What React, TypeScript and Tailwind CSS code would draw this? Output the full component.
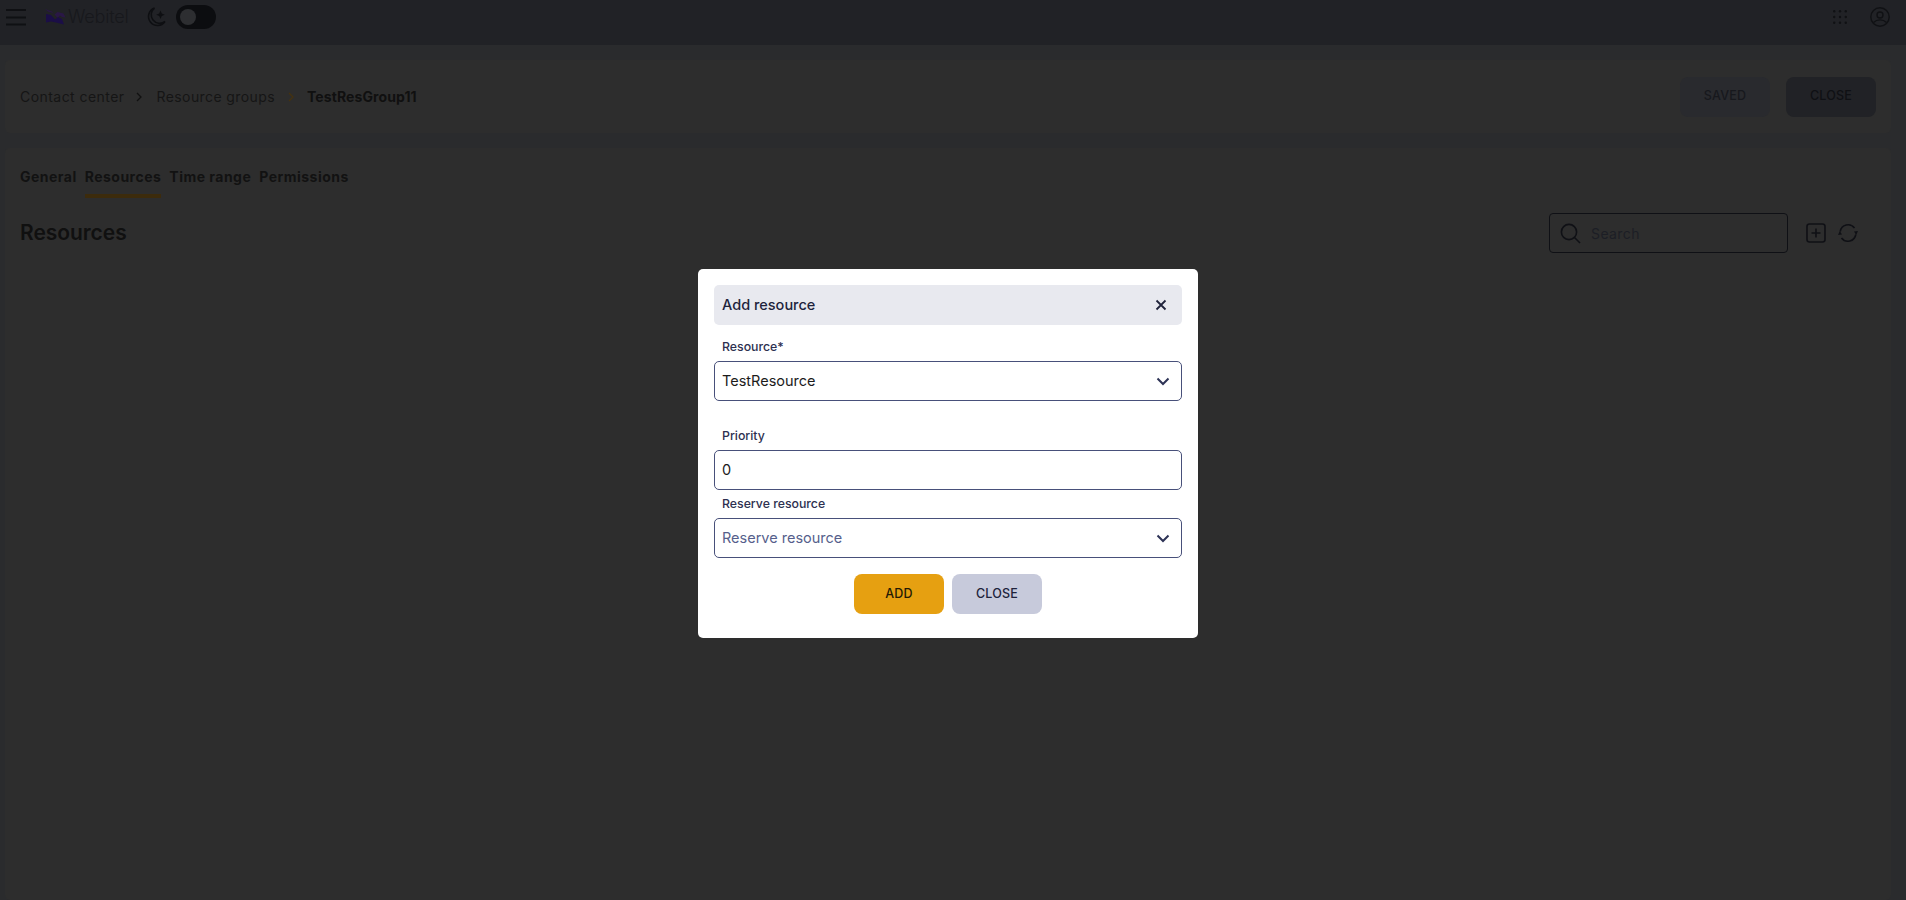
const font = { fontFamily: "Inter, 'Noto Sans', sans-serif" };

function Chevron({ className }: { className: string }) {
  return (
    <svg width="10" height="12" viewBox="0 0 10 12" fill="none" className={className}>
      <path d="M3 2l4 4-4 4" stroke="currentColor" strokeWidth="1.3" />
    </svg>
  );
}

function Caret() {
  return (
    <svg width="14" height="9" viewBox="0 0 14 9" fill="none" className="text-[#2d3356]">
      <path d="M1.5 1.5L7 7l5.5-5.5" stroke="currentColor" strokeWidth="2" />
    </svg>
  );
}

function Field({ value, muted, caret }: { value: string; muted?: boolean; caret?: boolean }) {
  return (
    <div className="flex h-10 items-center justify-between rounded-[5px] border border-[#48507a] bg-white pl-[7px] pr-[11px]">
      <span className={`text-[14.5px] ${muted ? "text-[#565f8c]" : "text-[#1c1c1c]"}`}>{value}</span>
      {caret && <Caret />}
    </div>
  );
}

export default function App() {
  return (
    <div style={font} className="relative flex h-[900px] w-full flex-col overflow-hidden bg-[#2a2b2d]">
      <header className="flex h-[45px] shrink-0 items-start justify-between bg-[#212226] pl-[6px] pr-[16px]">
        <div className="flex items-start">
          <svg width="20" height="17" viewBox="0 0 20 17" className="mt-[8.5px] text-[#0f1013]">
            <path d="M0 1h20M0 8.5h20M0 15.5h20" stroke="currentColor" strokeWidth="1.8" />
          </svg>
          <svg width="22" height="16" viewBox="0 0 22 16" className="ml-[18px] mt-[9px]">
            <path d="M1 0l7 2.5 2.5 3 3-2.5 6 1.5 2 4-3.5-.5-2-1.5-2.5 2.5-4-5-5.5-1.5z" fill="#2a1746" />
            <path d="M2 5l5 1 4 4.5 3-2.5 4 2 2 5.5-8-2-5-1-5 1z" fill="#1b0e47" />
          </svg>
          <span className="ml-[2px] mt-[8px] w-[60px] text-[18px] font-light leading-[18px] tracking-[-0.2px] text-[#17181c]">Webitel</span>
          <svg width="20" height="20" viewBox="0 0 20 20" fill="none" className="ml-[18px] mt-[7px] text-[#0e0f12]">
            <path d="M8.5 1A9 9 0 1 0 19 14.5 8.5 8.5 0 0 1 8.5 1z" stroke="currentColor" strokeWidth="1.6" />
            <path d="M14.5 3.5l1.3 3 3 1.3-3 1.3-1.3 3-1.3-3-3-1.3 3-1.3z" fill="currentColor" />
          </svg>
          <div className="ml-[10px] mt-[5px] flex h-6 w-10 items-center rounded-full bg-[#0c0d10] pl-[4px]">
            <div className="h-[16px] w-[16px] rounded-full bg-[#2d2e31]" />
          </div>
        </div>
        <div className="mt-[7px] flex items-center gap-[23px] text-[#101114]">
          <svg width="14" height="14" viewBox="0 0 14 14" fill="currentColor">
            {[1.2, 7, 12.8].flatMap((y) => [1.2, 7, 12.8].map((x) => <circle key={`${x}-${y}`} cx={x} cy={y} r="1.2" />))}
          </svg>
          <svg width="20" height="20" viewBox="0 0 20 20" fill="none" stroke="currentColor" strokeWidth="1.4">
            <circle cx="10" cy="10" r="9.2" />
            <circle cx="10" cy="8" r="3" />
            <path d="M3.5 15.5c2-2 4-2.6 6.5-2.6s4.5.6 6.5 2.6" />
          </svg>
        </div>
      </header>

      <main className="flex flex-1 flex-col gap-[15px] pl-[5px] pr-[15px] pt-[15px]">
        <section className="flex h-[73px] items-center justify-between rounded-[5px] bg-[#2d2d2d] pl-[15px] pr-[15px]">
          <nav className="flex items-center text-[14px] text-[#151515]">
            <span className="tracking-[0.45px]">Contact center</span>
            <Chevron className="mx-[9px] text-[#111111]" />
            <span className="ml-[4px] tracking-[0.4px]">Resource groups</span>
            <Chevron className="mx-[11px] text-[#45320f]" />
            <span className="font-bold tracking-[0.1px] text-[#101010]">TestResGroup11</span>
          </nav>
          <div className="flex gap-4">
            <button className="h-10 w-[90px] rounded-[8px] bg-[#292a2e] text-[12.5px] font-medium tracking-[0.2px] text-[#17181d]">SAVED</button>
            <button className="h-10 w-[90px] rounded-[8px] bg-[#212226] text-[12.5px] font-medium tracking-[0.2px] text-[#0f1014]">CLOSE</button>
          </div>
        </section>

        <section className="flex flex-1 flex-col rounded-[5px] bg-[#2d2d2d] pl-[15px] pr-[32px] pt-[18px]">
          <div className="flex gap-2 text-[14px] font-bold tracking-[0.48px] text-[#121212]">
            <span className="pb-[11px]">General</span>
            <span className="border-b-4 border-[#3c2b0c] pb-[7px]">Resources</span>
            <span className="pb-[11px]">Time range</span>
            <span className="pb-[11px]">Permissions</span>
          </div>
          <div className="mt-[15px] flex items-center justify-between">
            <h1 className="text-[21px] font-semibold tracking-[-0.05px] text-[#101010]">Resources</h1>
            <div className="flex items-center">
              <div className="flex h-10 w-[239px] items-center gap-[10px] rounded-[4px] border border-[#0f1015] pl-[10px]">
                <svg width="21" height="21" viewBox="0 0 21 21" fill="none" stroke="#0f1015" strokeWidth="1.6">
                  <circle cx="9" cy="9" r="7.6" />
                  <path d="M14.5 14.5L20 20" />
                </svg>
                <span className="text-[14px] tracking-[0.4px] text-[#1c1e25]">Search</span>
              </div>
              <svg width="20" height="20" viewBox="0 0 20 20" fill="none" stroke="#0f1015" strokeWidth="1.6" className="ml-[18px]">
                <rect x="1" y="1" width="18" height="18" rx="2.5" />
                <path d="M10 5.5v9M5.5 10h9" />
              </svg>
              <svg width="22" height="20" viewBox="0 0 22 20" fill="none" stroke="#0f1015" strokeWidth="1.6" className="ml-[11px]">
                <path d="M3.2 8.5A8 8 0 0 1 17.5 5" />
                <path d="M18.8 11.5A8 8 0 0 1 4.5 15" />
                <path d="M21 8l-1.8 4-2.2-3.5zM1 12l1.8-4 2.2 3.5z" fill="#0f1015" stroke="none" />
              </svg>
            </div>
          </div>
        </section>
      </main>

      <div className="absolute inset-0 flex items-center justify-center pr-[10px] pt-[7px]">
        <div className="flex h-[369px] w-[500px] flex-col rounded-[5px] bg-white p-4">
          <div className="flex h-10 shrink-0 items-center justify-between rounded-[5px] bg-[#e8e9ef] pl-[8px] pr-[15px]">
            <span className="text-[14.5px] font-medium text-[#20233b]">Add resource</span>
            <svg width="12" height="12" viewBox="0 0 12 12" fill="none" stroke="#20233b" strokeWidth="1.8">
              <path d="M1.5 1.5l9 9M10.5 1.5l-9 9" />
            </svg>
          </div>
          <label className="ml-2 mt-[12px] h-[24px] text-[12.3px] font-medium leading-[20px] text-[#2d3050]">Resource*</label>
          <Field value="TestResource" caret />
          <label className="ml-2 mt-[25px] h-[24px] text-[12.3px] font-medium leading-[20px] text-[#2d3050]">Priority</label>
          <Field value="0" />
          <label className="ml-2 mt-[4px] h-[24px] text-[12.3px] font-medium leading-[20px] text-[#2d3050]">Reserve resource</label>
          <Field value="Reserve resource" muted caret />
          <div className="mt-4 flex justify-center gap-2">
            <button className="h-10 w-[90px] rounded-[8px] bg-[#e6a011] text-[12.5px] font-medium tracking-[0.2px] text-[#241a05]">ADD</button>
            <button className="h-10 w-[90px] rounded-[8px] bg-[#c7cadb] text-[12.5px] font-medium tracking-[0.2px] text-[#20233b]">CLOSE</button>
          </div>
        </div>
      </div>
    </div>
  );
}
